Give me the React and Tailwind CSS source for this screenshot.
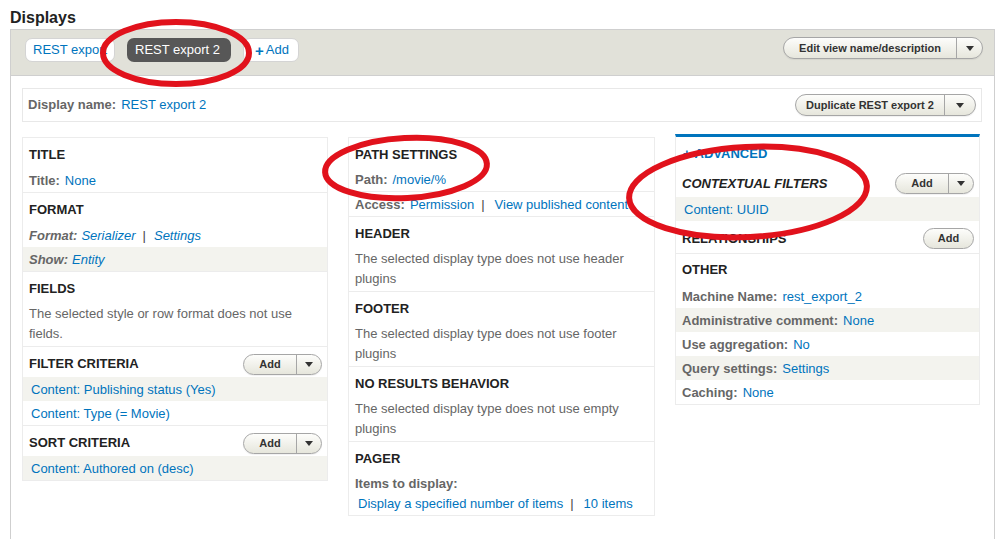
import React from "react";

function Caret() {
  return (
    <span className="inline-block h-0 w-0 border-x-[4px] border-t-[5px] border-x-transparent border-t-[#333]" />
  );
}

function SplitButton({ label, leftClass, rightClass, heightClass }) {
  return (
    <div
      className={`flex items-stretch rounded-full border border-[#a6a6a6] bg-linear-to-b from-[#fdfdfb] to-[#e6e6dc] text-[11px] font-bold leading-none text-[#333] shadow-[0_1px_1px_rgba(0,0,0,0.06)] ${heightClass}`}
    >
      <span className={`flex items-center justify-center ${leftClass}`}>{label}</span>
      <span className={`flex items-center justify-center border-l border-[#a6a6a6] ${rightClass}`}>
        <Caret />
      </span>
    </div>
  );
}

function AddSplit() {
  return (
    <SplitButton
      label="Add"
      heightClass="h-[21px]"
      leftClass="w-[52px]"
      rightClass="w-[25px]"
    />
  );
}

function AddSimple() {
  return (
    <div className="flex h-[21px] w-[51px] items-center justify-center rounded-full border border-[#a6a6a6] bg-linear-to-b from-[#fdfdfb] to-[#e6e6dc] text-[11px] font-bold leading-none text-[#333]">
      Add
    </div>
  );
}

function Header({ title, italic, action, tall }) {
  return (
    <div
      className={`flex items-center justify-between pl-[6px] pr-[5px] ${
        tall ? "h-[32px] pt-[3px]" : "h-[30px] pt-[4px]"
      }`}
    >
      <span
        className={`text-[13px] font-bold uppercase text-[#222] ${italic ? "italic" : ""}`}
      >
        {title}
      </span>
      {action}
    </div>
  );
}

function Label({ children, italic }) {
  return (
    <span className={`font-bold text-[#666] ${italic ? "mr-[4px] italic" : "mr-[5px]"}`}>
      {children}
    </span>
  );
}

function A({ children, italic }) {
  return <span className={`text-[#0074bd] ${italic ? "italic" : ""}`}>{children}</span>;
}

function Pipe({ tight }) {
  return (
    <span className={`ml-[7px] text-[#444] ${tight ? "mr-[8px]" : "mr-[10px]"}`}>|</span>
  );
}

function Row({ children, zebra, indent, border }) {
  return (
    <div
      className={`flex h-[24px] items-center whitespace-nowrap pt-[1px] ${
        indent ? "pl-[8px]" : "pl-[6px]"
      } ${zebra ? "bg-[#f3f3ee]" : ""} ${border ? "border-b border-[#ececec]" : ""}`}
    >
      {children}
    </div>
  );
}

function Para({ children }) {
  return (
    <div className="pb-[2px] pl-[6px] pr-[10px] pt-[2px] leading-[20px] text-[#666]">
      {children}
    </div>
  );
}

function Section({ children, last }) {
  return <div className={last ? "" : "border-b border-[#ececec]"}>{children}</div>;
}

export default function App() {
  return (
    <div className="relative h-[539px] w-[1000px] overflow-hidden bg-white font-['Liberation_Sans',Arial,sans-serif] text-[13px] text-[#333]">
      <div className="h-[29px] pl-[10px] pt-[8px] text-[16px] font-bold leading-[20px] text-[#222]">
        Displays
      </div>

      <div className="ml-[10px] min-h-[560px] w-[985px] border border-[#cfcfcf]">
        {/* tab bar */}
        <div className="flex h-[46px] items-start justify-between border-b border-[#cfcfcf] bg-[#e1e1d9] pl-[14px] pr-[11px]">
          <div className="mt-[8px] flex items-center gap-[12px]">
            <div className="flex h-[24px] w-[90px] items-center rounded-[7px] border border-[#d4d4d4] bg-white pl-[7px] text-[#0074bd]">
              REST export
            </div>
            <div className="flex h-[24px] w-[104px] items-center rounded-[7px] bg-[#575757] pl-[8px] text-white">
              REST export 2
            </div>
            <div className="flex h-[24px] w-[56px] items-center rounded-[7px] border border-[#d4d4d4] bg-white pl-[11px] text-[#0074bd]">
              <span className="mr-[2px] text-[15px] font-bold leading-none">+</span>Add
            </div>
          </div>
          <div className="mt-[7px]">
            <SplitButton
              label="Edit view name/description"
              heightClass="h-[22px]"
              leftClass="w-[172px]"
              rightClass="w-[26px]"
            />
          </div>
        </div>

        {/* body */}
        <div className="pl-[11px] pr-[12px] pt-[12px]">
          <div className="flex h-[34px] items-center justify-between border border-[#e8e8e8] pl-[5px] pr-[5px]">
            <div className="flex items-center">
              <Label>Display name:</Label>
              <A>REST export 2</A>
            </div>
            <SplitButton
              label="Duplicate REST export 2"
              heightClass="h-[22px]"
              leftClass="w-[148px]"
              rightClass="w-[31px]"
            />
          </div>

          <div className="mt-[12px] flex items-start gap-[20px]">
            {/* column 1 */}
            <div className="mt-[3px] w-[306px] border border-[#ececec]">
              <Section>
                <Header title="Title" />
                <Row>
                  <Label>Title:</Label>
                  <A>None</A>
                </Row>
              </Section>
              <Section>
                <Header title="Format" />
                <Row>
                  <Label italic>Format:</Label>
                  <A italic>Serializer</A>
                  <Pipe tight />
                  <A italic>Settings</A>
                </Row>
                <Row zebra>
                  <Label italic>Show:</Label>
                  <A italic>Entity</A>
                </Row>
              </Section>
              <Section>
                <Header title="Fields" />
                <Para>The selected style or row format does not use fields.</Para>
              </Section>
              <Section>
                <Header title="Filter criteria" action={<AddSplit />} />
                <Row zebra indent>
                  <A>Content: Publishing status (Yes)</A>
                </Row>
                <Row indent>
                  <A>Content: Type (= Movie)</A>
                </Row>
              </Section>
              <Section last>
                <Header title="Sort criteria" action={<AddSplit />} />
                <Row zebra indent>
                  <A>Content: Authored on (desc)</A>
                </Row>
              </Section>
            </div>

            {/* column 2 */}
            <div className="mt-[3px] w-[307px] border border-[#ececec]">
              <Section>
                <Header title="Path settings" />
                <Row border>
                  <Label>Path:</Label>
                  <A>/movie/%</A>
                </Row>
                <Row>
                  <Label>Access:</Label>
                  <A>Permission</A>
                  <Pipe />
                  <A>View published content</A>
                </Row>
              </Section>
              <Section>
                <Header title="Header" />
                <Para>The selected display type does not use header plugins</Para>
              </Section>
              <Section>
                <Header title="Footer" />
                <Para>The selected display type does not use footer plugins</Para>
              </Section>
              <Section>
                <Header title="No results behavior" />
                <Para>The selected display type does not use empty plugins</Para>
              </Section>
              <Section last>
                <Header title="Pager" />
                <div className="pb-[1px] pt-[2px] leading-[20px]">
                  <div className="pl-[6px]">
                    <Label>Items to display:</Label>
                  </div>
                  <div className="whitespace-nowrap pl-[9px]">
                    <A>Display a specified number of items</A>
                    <Pipe />
                    <A>10 items</A>
                  </div>
                </div>
              </Section>
            </div>

            {/* column 3 */}
            <div className="w-[305px] border-x border-b border-t-[3px] border-x-[#ececec] border-b-[#ececec] border-t-[#0074bd]">
              <div className="flex h-[30px] items-center pl-[7px] pt-[3px] text-[13px] font-bold text-[#0074bd]">
                <span className="mr-[4px]">+</span>ADVANCED
              </div>
              <div className="flex h-[30px] items-center justify-between pl-[6px] pr-[5px] pt-[2px]">
                <span className="pt-[1px] text-[13px] font-bold italic text-[#222]">
                  CONTEXTUAL FILTERS
                </span>
                <AddSplit />
              </div>
              <Row zebra indent>
                <A>Content: UUID</A>
              </Row>
              <Section>
                <Header title="Relationships" tall action={<AddSimple />} />
              </Section>
              <Section last>
                <div className="flex h-[30px] items-center pl-[6px] pt-[1px]">
                  <span className="text-[13px] font-bold text-[#222]">OTHER</span>
                </div>
                <Row>
                  <Label>Machine Name:</Label>
                  <A>rest_export_2</A>
                </Row>
                <Row zebra>
                  <Label>Administrative comment:</Label>
                  <A>None</A>
                </Row>
                <Row>
                  <Label>Use aggregation:</Label>
                  <A>No</A>
                </Row>
                <Row zebra>
                  <Label>Query settings:</Label>
                  <A>Settings</A>
                </Row>
                <Row>
                  <Label>Caching:</Label>
                  <A>None</A>
                </Row>
              </Section>
            </div>
          </div>
        </div>
      </div>

      {/* red annotation ellipses */}
      <svg
        className="pointer-events-none absolute left-0 top-0"
        width="1000"
        height="539"
        viewBox="0 0 1000 539"
      >
        <g fill="none" stroke="#e1121c" strokeWidth="6">
          <ellipse cx="176" cy="53" rx="73" ry="31" />
          <ellipse cx="406" cy="168" rx="81" ry="30" transform="rotate(-3 406 168)" />
          <ellipse cx="748" cy="192" rx="119" ry="45" transform="rotate(-3 748 192)" />
        </g>
      </svg>
    </div>
  );
}
